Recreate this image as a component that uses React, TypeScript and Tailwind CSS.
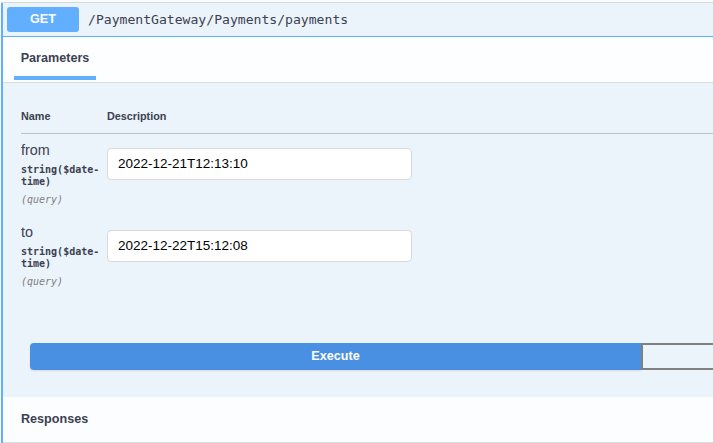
import React from "react";

const sans = { fontFamily: '"Liberation Sans", Arial, sans-serif' };
const mono = { fontFamily: '"DejaVu Sans Mono", "Liberation Mono", monospace' };

function ParamRow({ name, value }: { name: string; value: string }) {
  return (
    <div className="flex items-start pb-[10px]">
      <div className="w-[86px] shrink-0 pt-[8px]">
        <div className="text-[14.4px] leading-[17px] text-[#3b4151]" style={sans}>
          {name}
        </div>
        <div
          className="mt-[5px] w-[82px] text-[10px] leading-[12px] font-semibold text-[#3b4151]"
          style={mono}
        >
          string($date-time)
        </div>
        <div className="mt-[6px] text-[10px] leading-[12px] italic text-[#808080]" style={mono}>
          (query)
        </div>
      </div>
      <div className="pt-[14px]">
        <div
          className="flex h-[32px] w-[305px] items-center rounded-[4px] border border-[#d9d9d9] bg-white pl-[10px] text-[13.5px] text-black"
          style={sans}
        >
          {value}
        </div>
      </div>
    </div>
  );
}

export default function App() {
  return (
    <div className="h-[443px] w-[713px] overflow-hidden bg-[#fafbfc]" style={sans}>
      <div className="pt-[2px] pl-[1px]">
        <div className="border-t border-[#d5d9de]">
          <div className="border-l-2 border-[#61affe] bg-[#ebf3fb]">
            {/* summary */}
            <div className="flex h-[33px] items-center">
              <div className="ml-[4px] flex h-[25px] w-[72px] items-center justify-center rounded-[3px] bg-[#61affe] text-[12.6px] font-bold text-white">
                GET
              </div>
              <div className="ml-[9px] text-[13.1px] text-[#3b4151]" style={mono}>
                /PaymentGateway/Payments/payments
              </div>
            </div>
            <div className="h-[1px] bg-[#61affe]" />
            {/* tab header */}
            <div className="h-[46px] border-b border-[#d8dde3] bg-[#fdfeff] pl-[11px]">
              <div className="flex h-full w-[82px] flex-col">
                <div className="flex flex-1 items-center justify-center pt-[3px] text-[12.6px] font-bold text-[#3b4151]">
                  Parameters
                </div>
                <div className="mb-[2px] h-[4px] bg-[#61affe]" />
              </div>
            </div>
            {/* parameters */}
            <div className="pl-[18px] pt-[26px] pb-[27px]">
              <div className="flex border-b border-[#bcc2cb] pb-[10px] text-[10.8px] font-bold leading-[14px] text-[#3b4151]">
                <div className="w-[86px]">Name</div>
                <div>Description</div>
              </div>
              <ParamRow name="from" value="2022-12-21T12:13:10" />
              <ParamRow name="to" value="2022-12-22T15:12:08" />
              <div className="mt-[45px] ml-[9px] flex">
                <div className="flex h-[27px] w-[611px] shrink-0 items-center justify-center rounded-l-[4px] bg-[#4990e2] text-[12.6px] font-bold text-white shadow-[0_1px_2px_rgba(0,0,0,0.1)]">
                  Execute
                </div>
                <div className="h-[27px] w-[611px] shrink-0 border-2 border-[#808080] bg-transparent" />
              </div>
            </div>
            {/* responses */}
            <div className="flex h-[46px] items-center border-b border-[#d8dde3] bg-[#fbfdff] pl-[18px] text-[12.6px] font-bold text-[#3b4151]">
              Responses
            </div>
          </div>
        </div>
      </div>
    </div>
  );
}
